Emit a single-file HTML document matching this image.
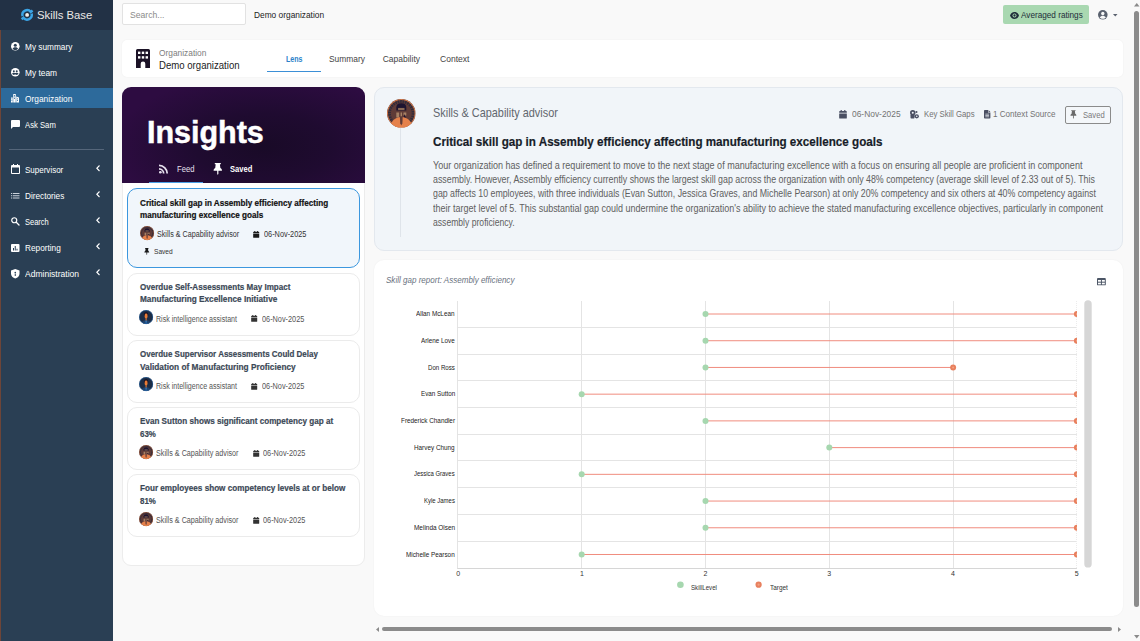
<!DOCTYPE html>
<html lang="en">
<head>
<meta charset="utf-8">
<title>Skills Base - Organization Lens</title>
<style>
*{box-sizing:border-box;margin:0;padding:0}
html,body{width:1140px;height:641px;overflow:hidden;background:#f9f9f9;font-family:"Liberation Sans",sans-serif;color:#222}
.abs{position:absolute}
.t{position:absolute;white-space:nowrap;line-height:1;transform-origin:0 50%}
.ico{position:absolute;overflow:visible}
#side{position:absolute;left:0;top:0;width:113px;height:641px;background:#2a3f54}
#side .hd{position:absolute;left:0;top:0;width:113px;height:29.500px;background:#223145}
#side .edge{position:absolute;left:0;top:30px;width:1px;height:611px;background:#6e4538}
#side .act{position:absolute;left:1px;top:88px;width:112px;height:20px;background:#2d6a9b}
#side .hr{position:absolute;left:9px;top:149px;width:95px;height:1px;background:#55667a}
.card{position:absolute;left:127px;width:233px;height:62.600px;background:#fff;border:1px solid #ebebeb;border-radius:10px}
</style>
</head>
<body>
<!-- ============ SIDEBAR ============ -->
<div id="side">
  <div class="hd"></div><div class="edge"></div><div class="act"></div><div class="hr"></div>
</div>
<!-- logo -->
<svg class="ico" style="left:21px;top:8px" width="12.200" height="13.800" viewBox="0 0 12.200 13.800"><g fill="none" stroke="#3ba4e6" stroke-width="2.500"><path d="M1.560 8.120A4.700 4.700 0 0 1 9.800 4.010L11.600 2.600"/><path d="M10.640 5.680A4.700 4.700 0 0 1 2.400 9.790L.6 11.200"/></g><circle cx="6.100" cy="6.900" r="1.900" fill="#f2efec"/></svg>
<!-- nav icons -->
<svg class="ico" style="left:10.500px;top:41.800px" width="8.600" height="8.600" viewBox="0 0 20 20"><circle cx="10" cy="10" r="10" fill="#fff"/><circle cx="10" cy="7.300" r="3.500" fill="#2a3f54"/><path d="M3.600 15.600c1.600-2.500 4-3.500 6.400-3.500s4.800 1 6.400 3.500c-1.600 1.900-4 2.900-6.400 2.900s-4.800-1-6.400-2.900z" fill="#2a3f54"/></svg>
<svg class="ico" style="left:10.500px;top:67.800px" width="8.600" height="8.600" viewBox="0 0 20 20"><circle cx="10" cy="10" r="10" fill="#fff"/><circle cx="6.600" cy="7.500" r="2.300" fill="#2a3f54"/><circle cx="13.400" cy="7.500" r="2.300" fill="#2a3f54"/><path d="M2.500 13.500c1-1.800 2.600-2.400 4.100-2.400s3.100.6 4.100 2.400c-1 1.500-2.600 2.500-4.100 2.500s-3.100-1-4.100-2.500zM9.300 13.500c1-1.800 2.600-2.400 4.100-2.400s3.100.6 4.100 2.400c-1 1.500-2.600 2.500-4.100 2.500s-3.100-1-4.100-2.500z" fill="#2a3f54"/></svg>
<svg class="ico" style="left:11px;top:93.500px" width="8" height="8.500" viewBox="0 0 16 17"><path d="M0 7h3.500v10H0zM4.500 0h5v17h-5zM10.500 5l5.500 2v10h-5.500z" fill="#fff"/><g fill="#2d6a9b"><rect x="6" y="2" width="2" height="1.600"/><rect x="6" y="5" width="2" height="1.600"/><rect x="6" y="8" width="2" height="1.600"/><rect x="12" y="9" width="2" height="1.600"/><rect x="12" y="12" width="2" height="1.600"/><rect x="1" y="9" width="1.500" height="1.600"/><rect x="1" y="12" width="1.500" height="1.600"/></g></svg>
<svg class="ico" style="left:10.500px;top:120px" width="9" height="9" viewBox="0 0 18 18"><path d="M2 0h14a2 2 0 0 1 2 2v10a2 2 0 0 1-2 2H4l-4 4V2a2 2 0 0 1 2-2z" fill="#fff"/></svg>
<svg class="ico" style="left:10.500px;top:164px" width="9" height="10" viewBox="0 0 18 20"><path d="M4 0v2H2a2 2 0 0 0-2 2v14a2 2 0 0 0 2 2h14a2 2 0 0 0 2-2V4a2 2 0 0 0-2-2h-2V0h-2v2H6V0zM2 7h14v11H2z" fill="#fff"/></svg>
<svg class="ico" style="left:11px;top:192.500px" width="8.500" height="5.500" viewBox="0 0 17 11"><g fill="#c9d1da"><rect x="0" y="0" width="2.500" height="2"/><rect x="4" y="0" width="13" height="2"/><rect x="0" y="4.500" width="2.500" height="2"/><rect x="4" y="4.500" width="13" height="2"/><rect x="0" y="9" width="2.500" height="2"/><rect x="4" y="9" width="13" height="2"/></g></svg>
<svg class="ico" style="left:10.800px;top:217px" width="8.500" height="8.500" viewBox="0 0 17 17"><circle cx="6.500" cy="6.500" r="5" fill="none" stroke="#fff" stroke-width="2.400"/><path d="M10.500 10.500l5.500 5.500" stroke="#fff" stroke-width="2.600" stroke-linecap="round"/></svg>
<svg class="ico" style="left:10.800px;top:243.500px" width="8.500" height="8" viewBox="0 0 17 16"><rect width="17" height="16" rx="2" fill="#fff"/><g fill="#2a3f54"><rect x="4" y="8" width="2" height="5"/><rect x="7.500" y="4" width="2" height="9"/><rect x="11" y="9.500" width="2" height="3.500"/></g></svg>
<svg class="ico" style="left:10.800px;top:269px" width="8.500" height="9.500" viewBox="0 0 17 19"><path d="M8.500 0l8.500 3v6c0 5-3.500 8.500-8.500 10C3.500 17.500 0 14 0 9V3z" fill="#fff"/><circle cx="8.500" cy="7" r="1.600" fill="#2a3f54"/><rect x="7.500" y="9" width="2" height="5" fill="#2a3f54"/></svg>
<!-- chevrons -->
<svg class="ico" style="left:95.500px;top:164.500px" width="4" height="6.500" viewBox="0 0 4 6.500"><path d="M3.500 .5L.8 3.250 3.500 6" fill="none" stroke="#fff" stroke-width="1.100"/></svg>
<svg class="ico" style="left:95.500px;top:190.500px" width="4" height="6.500" viewBox="0 0 4 6.500"><path d="M3.500 .5L.8 3.250 3.500 6" fill="none" stroke="#fff" stroke-width="1.100"/></svg>
<svg class="ico" style="left:95.500px;top:216.500px" width="4" height="6.500" viewBox="0 0 4 6.500"><path d="M3.500 .5L.8 3.250 3.500 6" fill="none" stroke="#fff" stroke-width="1.100"/></svg>
<svg class="ico" style="left:95.500px;top:242.500px" width="4" height="6.500" viewBox="0 0 4 6.500"><path d="M3.500 .5L.8 3.250 3.500 6" fill="none" stroke="#fff" stroke-width="1.100"/></svg>
<svg class="ico" style="left:95.500px;top:268.500px" width="4" height="6.500" viewBox="0 0 4 6.500"><path d="M3.500 .5L.8 3.250 3.500 6" fill="none" stroke="#fff" stroke-width="1.100"/></svg>

<!-- ============ TOPBAR ============ -->
<div class="abs" style="left:122px;top:3.200px;width:123.500px;height:22.300px;background:#fff;border:1px solid #e2e2e2;border-radius:2px"></div>
<div class="abs" style="left:1003px;top:5px;width:86px;height:19px;background:#a9d8b1;border-radius:2px"></div>
<svg class="ico" style="left:1010px;top:11.500px" width="9" height="7" viewBox="0 0 18 14"><path d="M9 0C4.500 0 1.200 3.200 0 7c1.200 3.800 4.500 7 9 7s7.800-3.200 9-7c-1.200-3.800-4.500-7-9-7z" fill="#1f2d3a"/><circle cx="9" cy="7" r="4" fill="#a9d8b1"/><circle cx="9" cy="7" r="2.300" fill="#1f2d3a"/></svg>
<svg class="ico" style="left:1098.400px;top:10.200px" width="9.600" height="9.600" viewBox="0 0 20 20"><circle cx="10" cy="10" r="10" fill="#59616e"/><circle cx="10" cy="7.300" r="3.500" fill="#f9f9f9"/><path d="M3.600 15.600c1.600-2.500 4-3.500 6.400-3.500s4.800 1 6.400 3.500c-1.600 1.900-4 2.900-6.400 2.900s-4.800-1-6.400-2.900z" fill="#f9f9f9"/></svg>
<svg class="ico" style="left:1113px;top:14px" width="4.500" height="2.500" viewBox="0 0 9 5"><path d="M0 0h9L4.500 5z" fill="#59616e"/></svg>

<!-- ============ ORG HEADER ============ -->
<div class="abs" style="left:122px;top:39.500px;width:1000.500px;height:37.500px;background:#fff;border-radius:5px;box-shadow:0 0 2px rgba(0,0,0,.05)"></div>
<svg class="ico" style="left:136px;top:48.500px" width="14" height="19" viewBox="0 0 14 19"><path d="M1.500 0h11A1.500 1.500 0 0 1 14 1.500V19H9.300v-4.300a2.300 2.300 0 0 0-4.600 0V19H0V1.500A1.500 1.500 0 0 1 1.500 0z" fill="#1b1226"/><g fill="#fff"><rect x="2" y="2.600" width="2.400" height="2.400"/><rect x="5.800" y="2.600" width="2.400" height="2.400"/><rect x="9.600" y="2.600" width="2.400" height="2.400"/><rect x="2" y="7.200" width="2.400" height="2.400"/><rect x="5.800" y="7.200" width="2.400" height="2.400"/><rect x="9.600" y="7.200" width="2.400" height="2.400"/></g></svg>
<div class="abs" style="left:267px;top:70.500px;width:54px;height:1.500px;background:#3b8fd6"></div>

<!-- ============ INSIGHTS PANEL ============ -->
<div class="abs" style="left:122px;top:87px;width:243px;height:478.500px;background:#fff;border:1px solid #ececec;border-radius:9px"></div>
<div class="abs" style="left:122px;top:87px;width:243px;height:95.500px;border-radius:9px 9px 0 0;background:radial-gradient(ellipse 62% 75% at 58% 62%,#190a27 0%,#1f0b30 45%,#2d0c41 100%)"></div>
<div class="abs" style="left:149px;top:181.500px;width:53.500px;height:1.500px;background:#4aa0e6"></div>
<svg class="ico" style="left:159px;top:164px" width="9.600" height="9.600" viewBox="0 0 20 20"><circle cx="2.800" cy="17.200" r="2.800" fill="#e6e0ee"/><path d="M0 8.500v3.600A7.900 7.900 0 0 1 7.900 20h3.600A11.500 11.500 0 0 0 0 8.500z" fill="#e6e0ee"/><path d="M0 1v3.700A15.300 15.300 0 0 1 15.300 20H19A19 19 0 0 0 0 1z" fill="#e6e0ee"/></svg>
<svg class="ico" style="left:213.300px;top:162.500px" width="9.600" height="12" viewBox="0 0 16 20"><path d="M3 0h10v2h-1.500l.8 6.500c1.700.8 2.700 2.300 2.700 4.500H9v5l-1 2-1-2v-5H1c0-2.200 1-3.700 2.700-4.500L4.500 2H3z" fill="#fff"/></svg>

<!-- cards -->
<div class="card" style="top:188px;height:80px;background:#f1f6fb;border:1.500px solid #3c97de"></div>
<div class="card" style="top:273px"></div>
<div class="card" style="top:340.100px"></div>
<div class="card" style="top:407.200px"></div>
<div class="card" style="top:474.300px"></div>
<svg class="ico" style="left:253.0px;top:231.2px" width="6.400" height="6.800" viewBox="0 0 16 18"><path d="M3 0h2.500v2h5V0H13v2h1.500A1.500 1.500 0 0 1 16 3.500V6H0V3.500A1.500 1.500 0 0 1 1.500 2H3zM0 7.300h16v9.200a1.500 1.500 0 0 1-1.500 1.500h-13A1.500 1.500 0 0 1 0 16.500z" fill="#1a1a1a"/></svg>
<svg class="ico" style="left:143.800px;top:248px" width="5.600" height="7" viewBox="0 0 16 20"><path d="M3 0h10v2h-1.500l.8 6.500c1.700.8 2.700 2.300 2.700 4.500H9v5l-1 2-1-2v-5H1c0-2.200 1-3.700 2.700-4.500L4.500 2H3z" fill="#1a1a1a"/></svg>
<svg class="ico" style="left:250.7px;top:315.4px" width="6.400" height="6.800" viewBox="0 0 16 18"><path d="M3 0h2.500v2h5V0H13v2h1.500A1.500 1.500 0 0 1 16 3.500V6H0V3.500A1.500 1.500 0 0 1 1.500 2H3zM0 7.300h16v9.200a1.500 1.500 0 0 1-1.500 1.500h-13A1.500 1.500 0 0 1 0 16.500z" fill="#333"/></svg>
<svg class="ico" style="left:250.7px;top:382.5px" width="6.400" height="6.800" viewBox="0 0 16 18"><path d="M3 0h2.500v2h5V0H13v2h1.500A1.500 1.500 0 0 1 16 3.500V6H0V3.500A1.500 1.500 0 0 1 1.500 2H3zM0 7.300h16v9.200a1.500 1.500 0 0 1-1.500 1.500h-13A1.500 1.500 0 0 1 0 16.500z" fill="#333"/></svg>
<svg class="ico" style="left:252.8px;top:449.5px" width="6.400" height="6.800" viewBox="0 0 16 18"><path d="M3 0h2.500v2h5V0H13v2h1.500A1.500 1.500 0 0 1 16 3.500V6H0V3.500A1.500 1.500 0 0 1 1.500 2H3zM0 7.300h16v9.200a1.500 1.500 0 0 1-1.500 1.500h-13A1.500 1.500 0 0 1 0 16.500z" fill="#333"/></svg>
<svg class="ico" style="left:252.8px;top:516.5px" width="6.400" height="6.800" viewBox="0 0 16 18"><path d="M3 0h2.500v2h5V0H13v2h1.500A1.500 1.500 0 0 1 16 3.500V6H0V3.500A1.500 1.500 0 0 1 1.500 2H3zM0 7.300h16v9.200a1.500 1.500 0 0 1-1.500 1.500h-13A1.500 1.500 0 0 1 0 16.500z" fill="#333"/></svg>

<!-- ============ DETAIL CARD ============ -->
<div class="abs" style="left:374px;top:86.500px;width:748.500px;height:164px;background:#f1f5f9;border:1px solid #e3e8ee;border-radius:10px"></div>
<div class="abs" style="left:400px;top:128px;width:1px;height:109px;background:#dfe4ea"></div>
<!-- meta icons -->
<svg class="ico" style="left:839.400px;top:109.800px" width="8" height="8.600" viewBox="0 0 16 18"><path d="M3 0h2.500v2h5V0H13v2h1.500A1.500 1.500 0 0 1 16 3.500V6H0V3.500A1.500 1.500 0 0 1 1.500 2H3zM0 7.300h16v9.200a1.500 1.500 0 0 1-1.500 1.500h-13A1.500 1.500 0 0 1 0 16.500z" fill="#4a4f63"/></svg>
<svg class="ico" style="left:909.900px;top:109.800px" width="9" height="8.600" viewBox="0 0 18 17"><circle cx="5.500" cy="5.500" r="5.500" fill="#4a4f63"/><circle cx="5.500" cy="5.500" r="2" fill="#f1f5f9"/><rect x="1" y="9" width="8" height="8" rx="1.500" fill="#4a4f63"/><circle cx="13.500" cy="12.500" r="4.300" fill="#4a4f63"/><circle cx="13.500" cy="12.500" r="1.600" fill="#f1f5f9"/><circle cx="13" cy="4" r="2" fill="#4a4f63"/></svg>
<svg class="ico" style="left:983.600px;top:109.800px" width="6.400" height="8.600" viewBox="0 0 12 16"><path d="M1.500 0H7.500V4.500H12V14.500A1.500 1.500 0 0 1 10.500 16h-9A1.500 1.500 0 0 1 0 14.500v-13A1.500 1.500 0 0 1 1.500 0zM8.500 0L12 3.500H8.500z" fill="#4a4f63"/><g fill="#f1f5f9"><rect x="2.500" y="7" width="7" height="1.200"/><rect x="2.500" y="9.600" width="7" height="1.200"/><rect x="2.500" y="12.200" width="7" height="1.200"/></g></svg>
<div class="abs" style="left:1064.500px;top:105.500px;width:46px;height:18.500px;border:1px solid #8b8b8b;border-radius:2px;background:#f4f7fa"></div>
<svg class="ico" style="left:1069.800px;top:110.300px" width="6.800" height="9" viewBox="0 0 16 20"><path d="M3 0h10v2h-1.500l.8 6.500c1.700.8 2.700 2.300 2.700 4.500H9v5l-1 2-1-2v-5H1c0-2.200 1-3.700 2.700-4.500L4.500 2H3z" fill="#6a6a6a"/></svg>

<!-- ============ CHART CARD ============ -->
<div class="abs" style="left:374px;top:260px;width:748.500px;height:356px;background:#fff;border-radius:10px;box-shadow:0 0 2px rgba(0,0,0,.05)"></div>
<svg class="ico" style="left:1097.200px;top:277.800px" width="8.800" height="7.400" viewBox="0 0 18 15"><rect width="18" height="15" rx="2" fill="#4b5565"/><g fill="#fff"><rect x="2" y="4" width="6" height="3.500"/><rect x="10" y="4" width="6" height="3.500"/><rect x="2" y="9.500" width="6" height="3.500"/><rect x="10" y="9.500" width="6" height="3.500"/></g></svg>
<svg class="ico" style="left:374px;top:260px" width="749" height="356" viewBox="374 260 749 356"><defs><clipPath id="cp"><rect x="452.9" y="300.6" width="624.1" height="269.9"/></clipPath></defs><path d="M457.5 301.0V569.0M581.5 301.0V569.0M705.5 301.0V569.0M829.5 301.0V569.0M953.5 301.0V569.0M457.9 327.5H1076.9M457.9 354.5H1076.9M457.9 380.5H1076.9M457.9 407.5H1076.9M457.9 434.5H1076.9M457.9 460.5H1076.9M457.9 487.5H1076.9M457.9 514.5H1076.9M457.9 541.5H1076.9" fill="none" stroke="#e4e4e4" stroke-width="1"/><path d="M457.5 568.5H1076.9" fill="none" stroke="#d6d6d6" stroke-width="1"/><path d="M1076.500 301V568" fill="none" stroke="#ececec" stroke-width="1" stroke-dasharray="1 1"/><g clip-path="url(#cp)"><path d="M705.50 314.01H1076.90" stroke="#f08c7e" stroke-width="1"/><path d="M705.50 340.73H1076.90" stroke="#f08c7e" stroke-width="1"/><path d="M705.50 367.45H953.10" stroke="#f08c7e" stroke-width="1"/><path d="M581.70 394.17H1076.90" stroke="#f08c7e" stroke-width="1"/><path d="M705.50 420.89H1076.90" stroke="#f08c7e" stroke-width="1"/><path d="M829.30 447.61H1076.90" stroke="#f08c7e" stroke-width="1"/><path d="M581.70 474.33H1076.90" stroke="#f08c7e" stroke-width="1"/><path d="M705.50 501.05H1076.90" stroke="#f08c7e" stroke-width="1"/><path d="M705.50 527.77H1076.90" stroke="#f08c7e" stroke-width="1"/><path d="M581.70 554.49H1076.90" stroke="#f08c7e" stroke-width="1"/><circle cx="705.50" cy="314.01" r="3" fill="#a6d7af"/><circle cx="1076.90" cy="314.01" r="3" fill="#e8805e"/><circle cx="1076.90" cy="314.01" r="1" fill="#f2a182"/><circle cx="705.50" cy="340.73" r="3" fill="#a6d7af"/><circle cx="1076.90" cy="340.73" r="3" fill="#e8805e"/><circle cx="1076.90" cy="340.73" r="1" fill="#f2a182"/><circle cx="705.50" cy="367.45" r="3" fill="#a6d7af"/><circle cx="953.10" cy="367.45" r="3" fill="#e8805e"/><circle cx="953.10" cy="367.45" r="1" fill="#f2a182"/><circle cx="581.70" cy="394.17" r="3" fill="#a6d7af"/><circle cx="1076.90" cy="394.17" r="3" fill="#e8805e"/><circle cx="1076.90" cy="394.17" r="1" fill="#f2a182"/><circle cx="705.50" cy="420.89" r="3" fill="#a6d7af"/><circle cx="1076.90" cy="420.89" r="3" fill="#e8805e"/><circle cx="1076.90" cy="420.89" r="1" fill="#f2a182"/><circle cx="829.30" cy="447.61" r="3" fill="#a6d7af"/><circle cx="1076.90" cy="447.61" r="3" fill="#e8805e"/><circle cx="1076.90" cy="447.61" r="1" fill="#f2a182"/><circle cx="581.70" cy="474.33" r="3" fill="#a6d7af"/><circle cx="1076.90" cy="474.33" r="3" fill="#e8805e"/><circle cx="1076.90" cy="474.33" r="1" fill="#f2a182"/><circle cx="705.50" cy="501.05" r="3" fill="#a6d7af"/><circle cx="1076.90" cy="501.05" r="3" fill="#e8805e"/><circle cx="1076.90" cy="501.05" r="1" fill="#f2a182"/><circle cx="705.50" cy="527.77" r="3" fill="#a6d7af"/><circle cx="1076.90" cy="527.77" r="3" fill="#e8805e"/><circle cx="1076.90" cy="527.77" r="1" fill="#f2a182"/><circle cx="581.70" cy="554.49" r="3" fill="#a6d7af"/><circle cx="1076.90" cy="554.49" r="3" fill="#e8805e"/><circle cx="1076.90" cy="554.49" r="1" fill="#f2a182"/></g><circle cx="680.400" cy="584.700" r="3.300" fill="#a6d7af"/><circle cx="758.600" cy="584.700" r="3.100" fill="#e8805e"/><circle cx="758.600" cy="584.700" r="1.100" fill="#f2a182"/><rect x="1084.300" y="300.300" width="7.400" height="267.300" rx="3.700" fill="#d6d6d6"/></svg>
<svg class="ico" style="left:386.6px;top:99.0px" width="28.6" height="28.6" viewBox="0 0 40 40"><defs><clipPath id="c4122"><circle cx="20" cy="20" r="20"/></clipPath></defs><g clip-path="url(#c4122)"><rect width="40" height="40" fill="#5f3b37"/><circle cx="20" cy="20" r="16.800" fill="none" stroke="#26283c" stroke-width="4.600" stroke-dasharray="2.200 1.300" opacity=".8"/><path d="M13 12q0-6 7-6t7 6v4h-14z" fill="#1d1430"/><rect x="15.500" y="12.500" width="9" height="3" fill="#8a6a55"/><path d="M13 19h4v7h-4zM19 19h2v8h-2zM23 19h4v4h-4z" fill="#b89470" opacity=".8"/><path d="M24 21l4 8h-5z" fill="#1d1430"/><ellipse cx="20" cy="40" rx="15.500" ry="14.800" fill="#e5814b"/><path d="M18 24h4l-.5 10-1.500 3-1.500-3z" fill="#5f3b37"/><circle cx="20" cy="20" r="19.300" fill="none" stroke="#e5814b" stroke-width="1.400" opacity=".85"/></g></svg>
<svg class="ico" style="left:140.0px;top:225.7px" width="14.2" height="14.2" viewBox="0 0 40 40"><defs><clipPath id="c1703"><circle cx="20" cy="20" r="20"/></clipPath></defs><g clip-path="url(#c1703)"><rect width="40" height="40" fill="#5f3b37"/><circle cx="20" cy="20" r="16.800" fill="none" stroke="#26283c" stroke-width="4.600" stroke-dasharray="2.200 1.300" opacity=".8"/><path d="M13 12q0-6 7-6t7 6v4h-14z" fill="#1d1430"/><rect x="15.500" y="12.500" width="9" height="3" fill="#8a6a55"/><path d="M13 19h4v7h-4zM19 19h2v8h-2zM23 19h4v4h-4z" fill="#b89470" opacity=".8"/><path d="M24 21l4 8h-5z" fill="#1d1430"/><ellipse cx="20" cy="40" rx="15.500" ry="14.800" fill="#e5814b"/><path d="M18 24h4l-.5 10-1.500 3-1.500-3z" fill="#5f3b37"/><circle cx="20" cy="20" r="19.300" fill="none" stroke="#e5814b" stroke-width="1.400" opacity=".85"/></g></svg>
<svg class="ico" style="left:139.4px;top:310.1px" width="14.2" height="14.2" viewBox="0 0 40 40"><defs><clipPath id="c1782"><circle cx="20" cy="20" r="20"/></clipPath></defs><g clip-path="url(#c1782)"><rect width="40" height="40" fill="#1d2d46"/><path d="M14 13q0-7 6-7t6 7v3h-12z" fill="#150d22"/><path d="M16 14q0-4 4-4t4 4v5q0 3-2.500 4v9h-3v-9q-2.500-1-2.500-4z" fill="#e87a35"/><path d="M6 40l5-9 7-3 2 6 2-6 7 3 5 9z" fill="#22446e"/><path d="M18 30l2 10 2-10z" fill="#2f86d8"/><circle cx="20" cy="20" r="19.200" fill="none" stroke="#2f7fd0" stroke-width="1.600" opacity=".9"/></g></svg>
<svg class="ico" style="left:139.4px;top:377.3px" width="14.2" height="14.2" viewBox="0 0 40 40"><defs><clipPath id="c1849"><circle cx="20" cy="20" r="20"/></clipPath></defs><g clip-path="url(#c1849)"><rect width="40" height="40" fill="#1d2d46"/><path d="M14 13q0-7 6-7t6 7v3h-12z" fill="#150d22"/><path d="M16 14q0-4 4-4t4 4v5q0 3-2.500 4v9h-3v-9q-2.500-1-2.500-4z" fill="#e87a35"/><path d="M6 40l5-9 7-3 2 6 2-6 7 3 5 9z" fill="#22446e"/><path d="M18 30l2 10 2-10z" fill="#2f86d8"/><circle cx="20" cy="20" r="19.200" fill="none" stroke="#2f7fd0" stroke-width="1.600" opacity=".9"/></g></svg>
<svg class="ico" style="left:139.4px;top:444.5px" width="14.2" height="14.2" viewBox="0 0 40 40"><defs><clipPath id="c1916"><circle cx="20" cy="20" r="20"/></clipPath></defs><g clip-path="url(#c1916)"><rect width="40" height="40" fill="#5f3b37"/><circle cx="20" cy="20" r="16.800" fill="none" stroke="#26283c" stroke-width="4.600" stroke-dasharray="2.200 1.300" opacity=".8"/><path d="M13 12q0-6 7-6t7 6v4h-14z" fill="#1d1430"/><rect x="15.500" y="12.500" width="9" height="3" fill="#8a6a55"/><path d="M13 19h4v7h-4zM19 19h2v8h-2zM23 19h4v4h-4z" fill="#b89470" opacity=".8"/><path d="M24 21l4 8h-5z" fill="#1d1430"/><ellipse cx="20" cy="40" rx="15.500" ry="14.800" fill="#e5814b"/><path d="M18 24h4l-.5 10-1.500 3-1.500-3z" fill="#5f3b37"/><circle cx="20" cy="20" r="19.300" fill="none" stroke="#e5814b" stroke-width="1.400" opacity=".85"/></g></svg>
<svg class="ico" style="left:139.4px;top:511.5px" width="14.2" height="14.2" viewBox="0 0 40 40"><defs><clipPath id="c1983"><circle cx="20" cy="20" r="20"/></clipPath></defs><g clip-path="url(#c1983)"><rect width="40" height="40" fill="#5f3b37"/><circle cx="20" cy="20" r="16.800" fill="none" stroke="#26283c" stroke-width="4.600" stroke-dasharray="2.200 1.300" opacity=".8"/><path d="M13 12q0-6 7-6t7 6v4h-14z" fill="#1d1430"/><rect x="15.500" y="12.500" width="9" height="3" fill="#8a6a55"/><path d="M13 19h4v7h-4zM19 19h2v8h-2zM23 19h4v4h-4z" fill="#b89470" opacity=".8"/><path d="M24 21l4 8h-5z" fill="#1d1430"/><ellipse cx="20" cy="40" rx="15.500" ry="14.800" fill="#e5814b"/><path d="M18 24h4l-.5 10-1.500 3-1.500-3z" fill="#5f3b37"/><circle cx="20" cy="20" r="19.300" fill="none" stroke="#e5814b" stroke-width="1.400" opacity=".85"/></g></svg>

<!-- ============ SCROLLBARS ============ -->
<div class="abs" style="left:1134px;top:11px;width:4.500px;height:595.500px;border-radius:2.500px;background:#8b8b8b"></div>
<svg class="ico" style="left:1133.500px;top:3px" width="5.500" height="3.500" viewBox="0 0 11 7"><path d="M0 7h11L5.500 0z" fill="#8b8b8b"/></svg>
<svg class="ico" style="left:1133.500px;top:635px" width="5.500" height="3.500" viewBox="0 0 11 7"><path d="M0 0h11L5.500 7z" fill="#8b8b8b"/></svg>
<div class="abs" style="left:381.500px;top:627px;width:730px;height:4px;border-radius:2px;background:#8b8b8b"></div>
<svg class="ico" style="left:375.500px;top:626.500px" width="3" height="5" viewBox="0 0 6 10"><path d="M6 0v10L0 5z" fill="#8b8b8b"/></svg>
<svg class="ico" style="left:1118px;top:626.500px" width="3" height="5" viewBox="0 0 6 10"><path d="M0 0v10L6 5z" fill="#8b8b8b"/></svg>

<div class="t" style="left:36.9px;top:9.6px;font-size:11.2px;color:#ebe8e6;transform:scaleX(1.009)">Skills Base</div>
<div class="t" style="left:24.7px;top:43.0px;font-size:9px;color:#fff;transform:scaleX(0.918)">My summary</div>
<div class="t" style="left:24.7px;top:69.1px;font-size:9px;color:#fff;transform:scaleX(0.930)">My team</div>
<div class="t" style="left:24.7px;top:95.1px;font-size:9px;color:#fff;transform:scaleX(0.927)">Organization</div>
<div class="t" style="left:24.7px;top:121.3px;font-size:9px;color:#fff;transform:scaleX(0.855)">Ask Sam</div>
<div class="t" style="left:24.7px;top:165.6px;font-size:9px;color:#fff;transform:scaleX(0.890)">Supervisor</div>
<div class="t" style="left:24.7px;top:191.7px;font-size:9px;color:#fff;transform:scaleX(0.914)">Directories</div>
<div class="t" style="left:24.7px;top:217.9px;font-size:9px;color:#fff;transform:scaleX(0.834)">Search</div>
<div class="t" style="left:24.7px;top:243.5px;font-size:9px;color:#fff;transform:scaleX(0.917)">Reporting</div>
<div class="t" style="left:24.7px;top:269.6px;font-size:9px;color:#fff;transform:scaleX(0.947)">Administration</div>
<div class="t" style="left:129.7px;top:11.3px;font-size:9px;color:#8a8a8a;transform:scaleX(0.958)">Search...</div>
<div class="t" style="left:254.3px;top:11.4px;font-size:9px;color:#222;transform:scaleX(0.927)">Demo organization</div>
<div class="t" style="left:1021.2px;top:10.7px;font-size:9px;color:#1f2d3a;transform:scaleX(0.910)">Averaged ratings</div>
<div class="t" style="left:159.4px;top:48.8px;font-size:8.5px;color:#7c7c7c;transform:scaleX(0.983)">Organization</div>
<div class="t" style="left:159.4px;top:59.5px;font-size:10.5px;color:#222;transform:scaleX(0.914)">Demo organization</div>
<div class="t" style="left:285.9px;top:54.5px;font-size:8.5px;color:#2b82c9;font-weight:bold;transform:scaleX(0.831)">Lens</div>
<div class="t" style="left:329.3px;top:54.5px;font-size:8.5px;color:#444;transform:scaleX(0.990)">Summary</div>
<div class="t" style="left:382.7px;top:54.5px;font-size:8.5px;color:#444">Capability</div>
<div class="t" style="left:440.4px;top:54.5px;font-size:8.5px;color:#444;transform:scaleX(1.007)">Context</div>
<div class="t" style="left:147.2px;top:116.5px;font-size:31px;color:#fff;font-weight:bold;transform:scaleX(0.983);-webkit-text-stroke:.5px #fff">Insights</div>
<div class="t" style="left:176.6px;top:164.5px;font-size:9px;color:#e6e0ee;transform:scaleX(0.848)">Feed</div>
<div class="t" style="left:229.7px;top:164.5px;font-size:9px;color:#fff;font-weight:bold;transform:scaleX(0.841)">Saved</div>
<div class="t" style="left:140.1px;top:198.9px;font-size:9px;color:#111;font-weight:bold;transform:scaleX(0.904);-webkit-text-stroke:.2px #111">Critical skill gap in Assembly efficiency affecting</div>
<div class="t" style="left:140.1px;top:211.3px;font-size:9px;color:#111;font-weight:bold;transform:scaleX(0.902);-webkit-text-stroke:.2px #111">manufacturing excellence goals</div>
<div class="t" style="left:156.8px;top:230.2px;font-size:8.5px;color:#333;transform:scaleX(0.844)">Skills &amp; Capability advisor</div>
<div class="t" style="left:263.5px;top:230.2px;font-size:8.5px;color:#333;transform:scaleX(0.863)">06-Nov-2025</div>
<div class="t" style="left:154.0px;top:248.1px;font-size:7.5px;color:#333;transform:scaleX(0.879)">Saved</div>
<div class="t" style="left:139.7px;top:283.1px;font-size:9px;color:#3b4856;font-weight:bold;transform:scaleX(0.895);-webkit-text-stroke:.2px #3b4856">Overdue Self-Assessments May Impact</div>
<div class="t" style="left:139.7px;top:295.3px;font-size:9px;color:#3b4856;font-weight:bold;transform:scaleX(0.915);-webkit-text-stroke:.2px #3b4856">Manufacturing Excellence Initiative</div>
<div class="t" style="left:156.0px;top:314.9px;font-size:8.5px;color:#555;transform:scaleX(0.832)">Risk intelligence assistant</div>
<div class="t" style="left:261.7px;top:314.9px;font-size:8.5px;color:#555;transform:scaleX(0.861)">06-Nov-2025</div>
<div class="t" style="left:139.7px;top:350.1px;font-size:9px;color:#3b4856;font-weight:bold;transform:scaleX(0.886);-webkit-text-stroke:.2px #3b4856">Overdue Supervisor Assessments Could Delay</div>
<div class="t" style="left:139.7px;top:362.5px;font-size:9px;color:#3b4856;font-weight:bold;transform:scaleX(0.921);-webkit-text-stroke:.2px #3b4856">Validation of Manufacturing Proficiency</div>
<div class="t" style="left:156.0px;top:382.2px;font-size:8.5px;color:#555;transform:scaleX(0.832)">Risk intelligence assistant</div>
<div class="t" style="left:261.7px;top:382.2px;font-size:8.5px;color:#555;transform:scaleX(0.861)">06-Nov-2025</div>
<div class="t" style="left:139.7px;top:417.3px;font-size:9px;color:#3b4856;font-weight:bold;transform:scaleX(0.900);-webkit-text-stroke:.2px #3b4856">Evan Sutton shows significant competency gap at</div>
<div class="t" style="left:139.7px;top:429.6px;font-size:9px;color:#3b4856;font-weight:bold;transform:scaleX(0.883);-webkit-text-stroke:.2px #3b4856">63%</div>
<div class="t" style="left:156.0px;top:449.4px;font-size:8.5px;color:#555;transform:scaleX(0.848)">Skills &amp; Capability advisor</div>
<div class="t" style="left:263.3px;top:449.4px;font-size:8.5px;color:#555;transform:scaleX(0.861)">06-Nov-2025</div>
<div class="t" style="left:139.7px;top:484.3px;font-size:9px;color:#3b4856;font-weight:bold;transform:scaleX(0.904);-webkit-text-stroke:.2px #3b4856">Four employees show competency levels at or below</div>
<div class="t" style="left:139.7px;top:496.7px;font-size:9px;color:#3b4856;font-weight:bold;transform:scaleX(0.883);-webkit-text-stroke:.2px #3b4856">81%</div>
<div class="t" style="left:156.0px;top:515.9px;font-size:8.5px;color:#555;transform:scaleX(0.848)">Skills &amp; Capability advisor</div>
<div class="t" style="left:263.3px;top:515.9px;font-size:8.5px;color:#555;transform:scaleX(0.861)">06-Nov-2025</div>
<div class="t" style="left:433.2px;top:106.1px;font-size:13px;color:#62676e;transform:scaleX(0.839)">Skills &amp; Capability advisor</div>
<div class="t" style="left:851.5px;top:109.6px;font-size:9px;color:#737373;transform:scaleX(0.934)">06-Nov-2025</div>
<div class="t" style="left:923.6px;top:109.6px;font-size:9px;color:#737373;transform:scaleX(0.864)">Key Skill Gaps</div>
<div class="t" style="left:992.7px;top:109.6px;font-size:9px;color:#737373;transform:scaleX(0.899)">1 Context Source</div>
<div class="t" style="left:1083.2px;top:110.7px;font-size:9px;color:#7a7a7a;transform:scaleX(0.850)">Saved</div>
<div class="t" style="left:433.2px;top:134.6px;font-size:13px;color:#171c28;font-weight:bold;transform:scaleX(0.896);-webkit-text-stroke:.2px #171c28">Critical skill gap in Assembly efficiency affecting manufacturing excellence goals</div>
<div class="t" style="left:433.2px;top:160.6px;font-size:10px;color:#606060;transform:scaleX(0.904)">Your organization has defined a requirement to move to the next stage of manufacturing excellence with a focus on ensuring all people are proficient in component</div>
<div class="t" style="left:433.2px;top:174.9px;font-size:10px;color:#606060;transform:scaleX(0.884)">assembly. However, Assembly efficiency currently shows the largest skill gap across the organization with only 48% competency (average skill level of 2.33 out of 5). This</div>
<div class="t" style="left:433.2px;top:189.2px;font-size:10px;color:#606060;transform:scaleX(0.879)">gap affects 10 employees, with three individuals (Evan Sutton, Jessica Graves, and Michelle Pearson) at only 20% competency and six others at 40% competency against</div>
<div class="t" style="left:433.2px;top:203.5px;font-size:10px;color:#606060;transform:scaleX(0.898)">their target level of 5. This substantial gap could undermine the organization&#x27;s ability to achieve the stated manufacturing excellence objectives, particularly in component</div>
<div class="t" style="left:433.2px;top:217.8px;font-size:10px;color:#606060;transform:scaleX(0.860)">assembly proficiency.</div>
<div class="t" style="left:386.0px;top:276.1px;font-size:8.5px;color:#6a7280;font-style:italic;transform:scaleX(0.946)">Skill gap report: Assembly efficiency</div>
<div class="t" style="left:416.4px;top:310.1px;font-size:7.5px;color:#222;transform:scaleX(0.847)">Allan McLean</div>
<div class="t" style="left:421.1px;top:336.8px;font-size:7.5px;color:#222;transform:scaleX(0.844)">Arlene Love</div>
<div class="t" style="left:428.1px;top:363.5px;font-size:7.5px;color:#222;transform:scaleX(0.814)">Don Ross</div>
<div class="t" style="left:420.7px;top:390.2px;font-size:7.5px;color:#222;transform:scaleX(0.837)">Evan Sutton</div>
<div class="t" style="left:400.9px;top:416.9px;font-size:7.5px;color:#222;transform:scaleX(0.847)">Frederick Chandler</div>
<div class="t" style="left:414.3px;top:443.7px;font-size:7.5px;color:#222;transform:scaleX(0.847)">Harvey Chung</div>
<div class="t" style="left:414.3px;top:470.4px;font-size:7.5px;color:#222;transform:scaleX(0.792)">Jessica Graves</div>
<div class="t" style="left:424.0px;top:497.1px;font-size:7.5px;color:#222;transform:scaleX(0.797)">Kyle James</div>
<div class="t" style="left:413.7px;top:523.8px;font-size:7.5px;color:#222;transform:scaleX(0.859)">Melinda Olsen</div>
<div class="t" style="left:406.2px;top:550.5px;font-size:7.5px;color:#222;transform:scaleX(0.846)">Michelle Pearson</div>
<div class="t" style="left:456.2px;top:569.9px;font-size:7px;color:#333">0</div>
<div class="t" style="left:579.9px;top:569.9px;font-size:7px;color:#333">1</div>
<div class="t" style="left:703.6px;top:569.9px;font-size:7px;color:#333">2</div>
<div class="t" style="left:827.3px;top:569.9px;font-size:7px;color:#333">3</div>
<div class="t" style="left:951.0px;top:569.9px;font-size:7px;color:#333">4</div>
<div class="t" style="left:1074.7px;top:569.9px;font-size:7px;color:#333">5</div>
<div class="t" style="left:690.9px;top:583.5px;font-size:7px;color:#333;transform:scaleX(0.876)">SkillLevel</div>
<div class="t" style="left:769.5px;top:583.5px;font-size:7px;color:#333;transform:scaleX(0.919)">Target</div>
</body>
</html>
